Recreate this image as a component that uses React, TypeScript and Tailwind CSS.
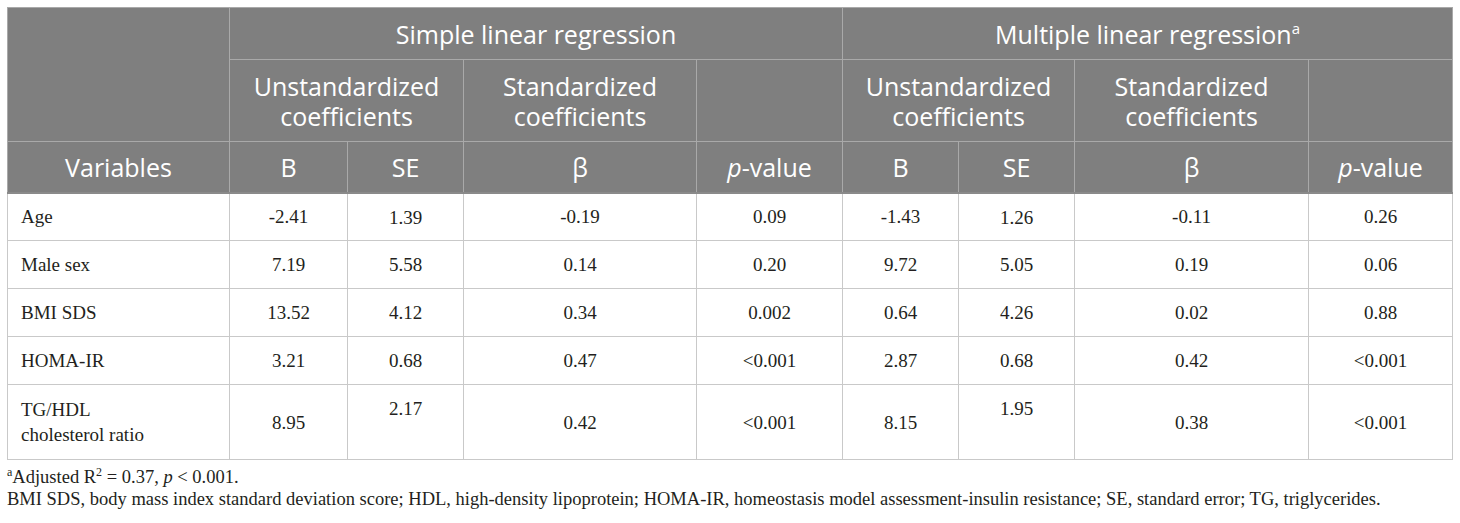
const COLS = [
  "w-[222px]", "w-[118px]", "w-[116px]", "w-[233px]", "w-[146px]",
  "w-[116px]", "w-[116px]", "w-[234px]", "w-[144px]",
];

type Row = { label: React.ReactNode; cells: string[]; tall?: boolean };

const ROWS: Row[] = [
  { label: "Age", cells: ["-2.41", "1.39", "-0.19", "0.09", "-1.43", "1.26", "-0.11", "0.26"] },
  { label: "Male sex", cells: ["7.19", "5.58", "0.14", "0.20", "9.72", "5.05", "0.19", "0.06"] },
  { label: "BMI SDS", cells: ["13.52", "4.12", "0.34", "0.002", "0.64", "4.26", "0.02", "0.88"] },
  { label: "HOMA-IR", cells: ["3.21", "0.68", "0.47", "<0.001", "2.87", "0.68", "0.42", "<0.001"] },
  {
    label: (
      <>
        TG/HDL
        <br />
        cholesterol ratio
      </>
    ),
    cells: ["8.95", "2.17", "0.42", "<0.001", "8.15", "1.95", "0.38", "<0.001"],
    tall: true,
  },
];

const th = "border border-[#a9a9a9] font-normal text-center align-middle px-2";
const td = "border border-[#c9c9c9] text-center";

function PValue() {
  return (
    <>
      <i>p</i>-value
    </>
  );
}

export default function App() {
  return (
    <div className="bg-white p-[7px] w-[1460px] h-[523px]">
      <table className="table-fixed border-collapse w-[1445px]">
        <colgroup>
          {COLS.map((c, i) => (
            <col key={i} className={c} />
          ))}
        </colgroup>
        <thead className="bg-[#7f7f7f] text-white text-[25px] leading-[30px] font-['Open_Sans',sans-serif]">
          <tr className="h-[52px]">
            <th rowSpan={2} className={th} />
            <th colSpan={4} className={th}>Simple linear regression</th>
            <th colSpan={4} className={th}>
              Multiple linear regression<sup className="text-[15px] align-super top-0">a</sup>
            </th>
          </tr>
          <tr className="h-[82px]">
            <th colSpan={2} className={th}>Unstandardized coefficients</th>
            <th className={th}>Standardized coefficients</th>
            <th className={th} />
            <th colSpan={2} className={th}>Unstandardized coefficients</th>
            <th className={th}>Standardized coefficients</th>
            <th className={th} />
          </tr>
          <tr className="h-[51px] border-b-2 border-b-[#8a8a8a]">
            <th className={th}>Variables</th>
            <th className={th}>B</th>
            <th className={th}>SE</th>
            <th className={th}>β</th>
            <th className={th}><PValue /></th>
            <th className={th}>B</th>
            <th className={th}>SE</th>
            <th className={th}>β</th>
            <th className={th}><PValue /></th>
          </tr>
        </thead>
        <tbody className="text-[19px] leading-[25px] text-[#231f20] font-['Liberation_Serif',serif]">
          {ROWS.map((r, i) => (
            <tr key={i} className={r.tall ? "h-[75px]" : "h-[48px]"}>
              <td className="border border-[#c9c9c9] text-left align-middle pl-[13px] pr-2">{r.label}</td>
              {r.cells.map((c, j) => {
                const se = j === 1 || j === 5;
                return (
                  <td
                    key={j}
                    className={`${td} ${se ? "align-top pt-[11px]" : "align-middle"}`}
                  >
                    {c}
                  </td>
                );
              })}
            </tr>
          ))}
        </tbody>
      </table>
      <div className="mt-[6px] text-[18.5px] leading-[22px] text-[#231f20] font-['Liberation_Serif',serif]">
        <p>
          <sup className="text-[12px] align-super top-0">a</sup>Adjusted R
          <sup className="text-[12px] align-super top-0">2</sup> = 0.37, <i>p</i> &lt; 0.001.
        </p>
        <p>
          BMI SDS, body mass index standard deviation score; HDL, high-density lipoprotein; HOMA-IR, homeostasis model
          assessment-insulin resistance; SE, standard error; TG, triglycerides.
        </p>
      </div>
    </div>
  );
}
